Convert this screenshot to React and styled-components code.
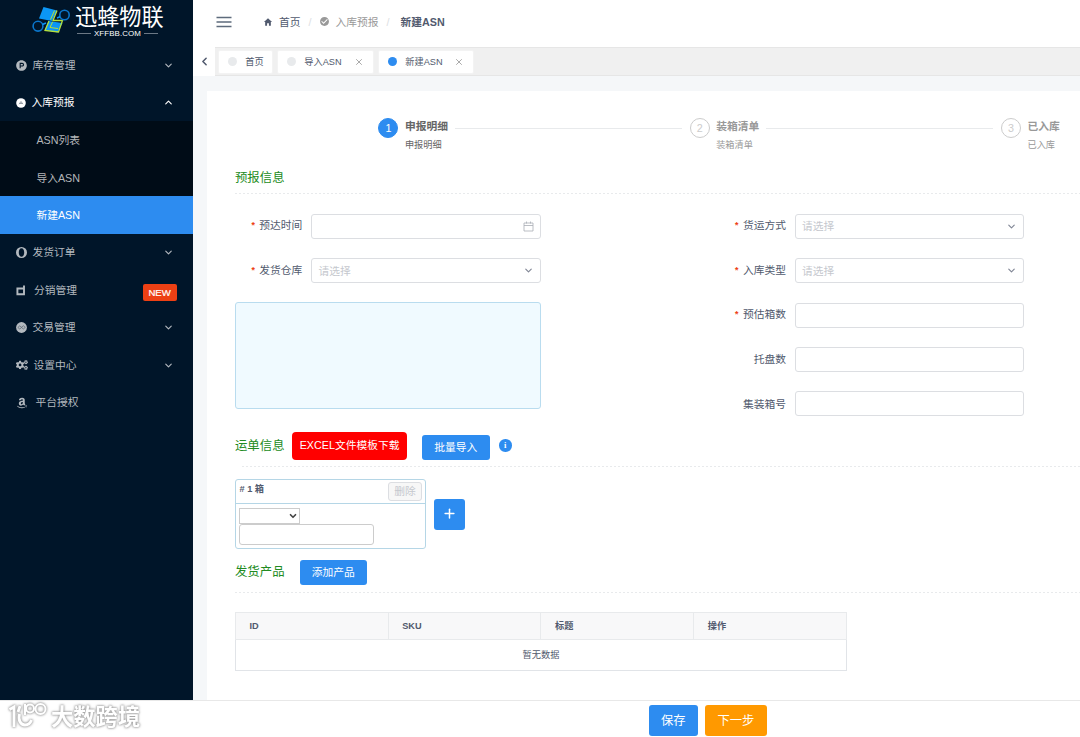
import React from 'react';
import styled, { createGlobalStyle, css } from 'styled-components';
import { ChevronDown, ChevronUp, ChevronLeft, X, Plus } from 'lucide-react';
import { FaProductHunt, FaCogs, FaAmazon } from 'react-icons/fa';
import { IoMdHome, IoMdCheckmarkCircle } from 'react-icons/io';

const GlobalStyle = createGlobalStyle`
  * {
    box-sizing: border-box;
  }

  body {
    margin: 0;
    overflow: hidden;
    background: #fff;
    color: #515a6e;
    font-family: "Liberation Sans", "Noto Sans CJK SC", sans-serif;
    font-size: 10.75px;
    line-height: 16px;
  }

  button, input, select, textarea {
    font-family: inherit;
    margin: 0;
  }
`;

const Page = styled.div`
  width: 1080px;
  height: 737px;
  display: flex;
  flex-direction: column;
  overflow: hidden;
`;

const Body = styled.div`
  display: flex;
  height: 700px;
`;

const Sidebar = styled.aside`
  flex: none;
  width: 193.4px;
  background: #001529;
`;

const Brand = styled.div`
  height: 46.4px;
  display: flex;
  padding: 5px 0 0 31px;
  gap: 4px;
`;

const BrandText = styled.div`
  color: #fff;
  padding-top: 1px;

  strong {
    display: block;
    font-size: 22.2px;
    font-weight: 400;
    line-height: 23px;
    white-space: nowrap;
  }
`;

const Domain = styled.div`
  display: flex;
  align-items: center;
  gap: 3px;
  margin-left: 2px;
  font-size: 7.9px;
  letter-spacing: .1px;
  line-height: 9px;

  &::before, &::after {
    content: "";
    width: 14px;
    height: 1px;
    background: #6b7885;
  }
`;

const MenuItem = styled.div`
  height: 37.5px;
  display: flex;
  align-items: center;
  padding: 0 19.2px 0 15.5px;
  color: ${props => props.$open ? '#fff' : '#b3b9bf'};

  > svg:first-child {
    flex: none;
  }

  span {
    flex: 1;
    margin-top: -1px;
    padding-left: ${props => props.$gap || 5}px;
  }
`;

const SubMenu = styled.div`
  background: #000c17;
`;

const SubItem = styled.div`
  height: 37.5px;
  line-height: 38px;
  padding-left: 36.4px;
  color: ${props => props.$active ? '#fff' : '#b3b6b9'};
  background: ${props => props.$active ? '#2d8cf0' : 'transparent'};
`;

const Badge = styled.b`
  margin: 4px -2.4px 0 0;
  width: 34px;
  height: 17px;
  border-radius: 2px;
  background: #ed4014;
  color: #fff;
  font-size: 9.6px;
  font-weight: 400;
  line-height: 17px;
  text-align: center;
  -webkit-text-stroke: .2px #fff;
`;

const Main = styled.main`
  flex: 1;
  min-width: 0;
  display: flex;
  flex-direction: column;
  background: #f5f7f9;
`;

const Header = styled.header`
  height: 47px;
  display: flex;
  align-items: center;
  padding: 0 0 4px 22.6px;
  background: #fff;
`;

const Crumbs = styled.nav`
  display: flex;
  align-items: center;
  margin-left: 31px;

  svg {
    margin-right: 6px;
  }

  i {
    width: 19px;
    text-align: center;
    font-style: normal;
    color: #dcdee2;
  }

  i + svg {
    margin-left: -1px;
  }

  span {
    color: #999;
  }
`;

const TabBar = styled.div`
  height: 29.4px;
  display: flex;
  align-items: center;
  background: #f0f0f0;
  border: solid #e6e6e6;
  border-width: 1px 0;
`;

const Arrow = styled.div`
  width: 21.4px;
  height: 29px;
  display: flex;
  align-items: center;
  justify-content: center;
  margin-right: 3.6px;
  background: #fff;
`;

const Tab = styled.div`
  width: ${props => props.$width}px;
  height: 24px;
  margin-right: 4px;
  display: flex;
  align-items: center;
  padding: 0 9px 0 8.5px;
  background: #fff;
  border: 1px solid #f3f3f3;
  border-radius: 2px;
  font-size: 9.2px;
  white-space: nowrap;

  &::before {
    content: "";
    flex: none;
    width: 9.4px;
    height: 9.4px;
    margin-right: 8px;
    border-radius: 50%;
    background: ${props => props.$active ? '#2d8cf0' : '#e8eaec'};
  }

  svg {
    margin-left: auto;
  }
`;

const Card = styled.section`
  flex: 1;
  margin: 14.6px 0 0 13.6px;
  padding-left: 28px;
  background: #fff;
  overflow: hidden;
`;

const Steps = styled.div`
  height: 74px;
  padding: 27px 0 0 143.4px;
  display: flex;
`;

const Step = styled.div`
  flex: none;
  width: 311.3px;
  display: flex;
  color: ${props => props.$active ? '#666' : '#999'};

  &:last-child h4::after {
    display: none;
  }
`;

const StepNumber = styled.div`
  width: 20px;
  height: 20px;
  margin-right: 6.5px;
  border: 1px solid ${props => props.$active ? '#2d8cf0' : '#ccc'};
  border-radius: 50%;
  background: ${props => props.$active ? '#2d8cf0' : '#fff'};
  color: ${props => props.$active ? '#fff' : '#ccc'};
  text-align: center;
  line-height: 19px;
`;

const StepText = styled.div`
  flex: 1;

  h4 {
    display: flex;
    align-items: center;
    margin: 0;
    font-size: 10.75px;
    line-height: 17px;
  }

  h4::after {
    content: "";
    flex: 1;
    height: 1px;
    margin: 4px 8px 0 7px;
    background: #e8eaec;
  }

  p {
    margin: 2px 0 0;
    font-size: 9.2px;
  }
`;

const SectionTitle = styled.h3`
  display: flex;
  align-items: center;
  height: ${props => props.$height}px;
  margin: 0;
  padding: ${props => props.$pad || '0 0 2px'};
  color: #228b22;
  font-size: 12.4px;
  font-weight: 400;
`;

const Divider = styled.div`
  height: 1px;
  margin-left: ${props => props.$indent || 0}px;
  background: repeating-linear-gradient(90deg, #e8eaec 0 2px, transparent 2px 4px);
`;

const FormGrid = styled.div`
  display: grid;
  grid-template-columns: 306px 305.4px;
  column-gap: 177.6px;
  height: 236px;
  padding-top: 20px;
`;

const FormColumn = styled.div`
  display: flex;
  flex-direction: column;
  gap: 19.3px;
`;

const Field = styled.div`
  flex: none;
  height: 25px;
  display: flex;
  align-items: center;
`;

const Label = styled.label`
  width: 67.4px;
  margin-right: 9px;
  text-align: right;
  white-space: nowrap;

  em {
    margin-right: 3.5px;
    color: #ed4014;
    font-family: "Liberation Mono", monospace;
    font-weight: 700;
    font-style: normal;
    font-size: 9px;
  }
`;

const Control = styled.div`
  flex: 1;
  height: 25px;
  display: flex;
  align-items: center;
  justify-content: space-between;
  padding: 0 6px;
  border: 1px solid #dcdee2;
  border-radius: 3px;
  color: #c5c8ce;

  svg {
    margin-left: auto;
  }
`;

const Remark = styled.textarea`
  width: 306px;
  height: 107px;
  flex: none;
  margin-top: -.6px;
  resize: none;
  border: 1px solid #b9dcef;
  border-radius: 3px;
  background: #f0faff;
`;

const buttonKinds = {
  primary: css`
    background: #2d8cf0;
  `,
  danger: css`
    background: #f00;
    border-radius: 4px;
  `,
  warning: css`
    background: #f90;
  `,
  disabled: css`
    background: #f7f7f7;
    border: 1px solid #dcdee2;
    color: #c5c8ce;
  `,
};

const Button = styled.button`
  display: flex;
  flex: none;
  align-items: center;
  justify-content: center;
  width: ${props => props.$width}px;
  height: ${props => props.$height}px;
  margin-top: ${props => props.$top || 0}px;
  margin-left: ${props => props.$left || 0}px;
  padding: 0 0 2px;
  border: 0;
  border-radius: 3px;
  color: #fff;
  font-size: ${props => props.$size || 10.75}px;
  white-space: nowrap;
  ${props => buttonKinds[props.$kind || 'primary']}
`;

const Info = styled.span`
  width: 12.5px;
  height: 12.5px;
  margin: -1px 0 0 9.5px;
  border-radius: 50%;
  background: #2d8cf0;
  color: #fff;
  font: bold 8.5px/12.5px "Liberation Serif", serif;
  text-align: center;
`;

const Boxes = styled.div`
  display: flex;
  align-items: center;
  padding-top: 12px;
`;

const Box = styled.div`
  width: 191px;
  height: 70px;
  border: 1px solid #b5d6e6;
  border-radius: 3px;
`;

const BoxHead = styled.div`
  height: 24px;
  display: flex;
  justify-content: space-between;
  padding: 2px 3px 0 3.5px;
  border-bottom: 1px solid #b5d6e6;
  font-size: 9.2px;

  b {
    margin-top: -1px;
  }
`;

const Carrier = styled.div`
  width: 61px;
  height: 16px;
  margin: 4px 0 0 3px;
  display: flex;
  align-items: center;
  justify-content: flex-end;
  padding-right: 1px;
  border: 1px solid #ccc;
`;

const Tracking = styled.input`
  display: block;
  width: 135px;
  height: 21px;
  margin: 0 0 0 3px;
  border: 1px solid #ccc;
  border-radius: 3px;
`;

const Table = styled.table`
  width: 612px;
  margin-top: 18.6px;
  table-layout: fixed;
  border-collapse: collapse;
  border: 1px solid #e1e4e8;
  font-size: 9.2px;

  th {
    height: 27px;
    padding: 0 0 0 13.5px;
    border: 1px solid #e8eaec;
    background: #f8f8f9;
    text-align: left;
  }

  td {
    height: 31px;
    padding: 0;
    text-align: center;
  }
`;

const Footer = styled.footer`
  height: 37px;
  display: flex;
  align-items: flex-start;
  padding: 4.4px 0 0 8px;
  border-top: 1px solid #e8e8e8;
  background: #fff;
`;

const Watermark = styled.div`
  display: flex;
  width: 640.6px;
  margin-top: -3px;
  color: #fff;
  filter: drop-shadow(0 0 1px #999) drop-shadow(0 0 1px #bbb);

  b {
    margin: 4px 0 0 3px;
    font-size: 22.3px;
    line-height: 24px;
    font-weight: 700;
  }
`;

const BrandLogo = () => (
  <svg width="40" height="32" viewBox="31 5 40 32">
    <path d="M43.500 7 57 10.500 52 21 39 18.500Z" fill="#0b96f5" />
    <path d="M48.500 21 62.500 23 57.500 32.500 45 30Z" fill="#0b96f5" />
    <path d="M57 10.500 53 20.500H62.500L58.500 32 45 30.500 49 21" fill="none" stroke="#b5e03c" strokeWidth="1.300" />
    <path d="M54.500 10.500 50.500 19.500M52.500 22 50 27.500 58 28.500" fill="none" stroke="#b5e03c" strokeWidth="1" />
    <circle cx="38" cy="26.200" r="4.900" fill="none" stroke="#0a76cc" strokeWidth="1.600" />
    <circle cx="64.500" cy="15" r="4.700" fill="none" stroke="#0a76cc" strokeWidth="1.600" />
    <path d="m42.500 24.500 3.500-1.500M57 18l3-1.200" stroke="#0b96f5" strokeWidth="1.500" />
  </svg>
);

const InboundIcon = () => (
  <svg width="10" height="10" viewBox="0 0 10 10">
    <circle cx="5" cy="5" r="4.800" fill="#fff" />
    <path d="M3 6.200 5 3.500l2 2.700M4 5.500h2" fill="none" stroke="#7d8791" strokeWidth=".8" />
  </svg>
);

const OrderIcon = () => (
  <svg width="11" height="11" viewBox="0 0 11 11">
    <path fillRule="evenodd" fill="currentColor" d="M5.500 0a5.500 5.500 0 1 0 0 11 5.500 5.500 0 0 0 0-11Zm0 1.300c1.700 0 2.700 1.900 2.700 4.200s-1 4.200-2.700 4.200-2.700-1.900-2.700-4.200 1-4.200 2.700-4.200Z" />
  </svg>
);

const ResaleIcon = () => (
  <svg width="10" height="11" viewBox="0 0 10 11">
    <path d="M8 .5v9M1.400 3.500H8v5.800H1.400z" fill="none" stroke="currentColor" strokeWidth="1.900" />
  </svg>
);

const TradeIcon = () => (
  <svg width="11" height="11" viewBox="0 0 11 11">
    <circle cx="5.500" cy="5.500" r="5.400" fill="currentColor" />
    <path d="m1.800 5.500 2-1.700L7.300 7l2-1.600-2-1.700L3.800 7Z" fill="none" stroke="#56636f" strokeWidth=".7" />
  </svg>
);

const MenuIcon = () => (
  <svg width="16" height="12" viewBox="0 0 16 12">
    <path d="M.5 1.500h15M.5 6h15M.5 10.500h15" stroke="#5e6b7c" strokeWidth="1.300" />
  </svg>
);

const CalendarIcon = () => (
  <svg width="11" height="11" viewBox="0 0 11 11">
    <path d="M1 2h9v8H1zM1 4.500h9M3.500.5v2M7.500.5v2" fill="none" stroke="#a9adb5" strokeWidth=".8" />
  </svg>
);

const WatermarkLogo = () => (
  <svg width="40" height="27" viewBox="8 702 40 27" fill="none" stroke="#fff" strokeWidth="2.800">
    <path d="m9.500 709.500 4.500-2.500v20M20 706l-2 6" />
    <path d="M19.500 714c-1.500 6 1 11 5.500 11 3 0 5.500-2 6.500-5" />
    <path d="M25 704v11" strokeWidth="2" />
    <circle cx="30" cy="708.500" r="4" strokeWidth="2" />
    <circle cx="40.500" cy="709" r="5" strokeWidth="2" />
  </svg>
);

const Chevron = ({ color = '#b3b9bf' }) => <ChevronDown size={11} strokeWidth={2.5} color={color} />;

const rightFields = [
  { label: '货运方式', required: true, select: true },
  { label: '入库类型', required: true, select: true },
  { label: '预估箱数', required: true },
  { label: '托盘数' },
  { label: '集装箱号' },
];

const FormField = ({ label, required, select, children }) => (
  <Field>
    <Label>{required && <em>*</em>}{label}</Label>
    <Control>
      {select && <>请选择<Chevron color="#808695" /></>}
      {children}
    </Control>
  </Field>
);

const App = () => {
  return <>
    <GlobalStyle />
    <Page>
      <Body>
        <Sidebar>
          <Brand>
            <BrandLogo />
            <BrandText>
              <strong>迅蜂物联</strong>
              <Domain>XFFBB.COM</Domain>
            </BrandText>
          </Brand>

          <MenuItem $gap={6}><FaProductHunt size={11} /><span>库存管理</span><Chevron /></MenuItem>
          <MenuItem $open $gap={6}><InboundIcon /><span>入库预报</span><ChevronUp size={11} strokeWidth={2.5} /></MenuItem>
          <SubMenu>
            <SubItem>ASN列表</SubItem>
            <SubItem>导入ASN</SubItem>
            <SubItem $active>新建ASN</SubItem>
          </SubMenu>
          <MenuItem $gap={6}><OrderIcon /><span>发货订单</span><Chevron /></MenuItem>
          <MenuItem $gap={8.5}><ResaleIcon /><span>分销管理</span><Badge>NEW</Badge></MenuItem>
          <MenuItem $gap={6}><TradeIcon /><span>交易管理</span><Chevron /></MenuItem>
          <MenuItem $gap={6}><FaCogs size={12} /><span>设置中心</span><Chevron /></MenuItem>
          <MenuItem $gap={8}><FaAmazon size={12} /><span>平台授权</span></MenuItem>
        </Sidebar>

        <Main>
          <Header>
            <MenuIcon />
            <Crumbs>
              <IoMdHome size={10} />首页
              <i>/</i>
              <IoMdCheckmarkCircle size={11} color="#999" /><span>入库预报</span>
              <i>/</i>
              <b>&nbsp;新建ASN</b>
            </Crumbs>
          </Header>

          <TabBar>
            <Arrow><ChevronLeft size={13} strokeWidth={2.8} /></Arrow>
            <Tab $width={55}>首页</Tab>
            <Tab $width={97}>导入ASN<X size={10} strokeWidth={2} color="#999" /></Tab>
            <Tab $width={96} $active>新建ASN<X size={10} strokeWidth={2} color="#999" /></Tab>
          </TabBar>

          <Card>
            <Steps>
              {['申报明细', '装箱清单', '已入库'].map((title, index) => (
                <Step key={title} $active={index === 0}>
                  <StepNumber $active={index === 0}>{index + 1}</StepNumber>
                  <StepText>
                    <h4>{title}</h4>
                    <p>{title}</p>
                  </StepText>
                </Step>
              ))}
            </Steps>

            <SectionTitle $height={28}>预报信息</SectionTitle>
            <Divider />

            <FormGrid>
              <FormColumn>
                <FormField label="预达时间" required><CalendarIcon /></FormField>
                <FormField label="发货仓库" required select />
                <Remark />
              </FormColumn>
              <FormColumn>
                {rightFields.map(field => <FormField key={field.label} {...field} />)}
              </FormColumn>
            </FormGrid>

            <SectionTitle $height={36} $pad="0 0 4px">
              运单信息
              <Button $kind="danger" $width={115} $height={28} $left={7.5}>EXCEL文件模板下载</Button>
              <Button $width={67.5} $height={25} $left={15} $top={3}>批量导入</Button>
              <Info>i</Info>
            </SectionTitle>
            <Divider $indent={7} />

            <Boxes>
              <Box>
                <BoxHead>
                  <b># 1 箱</b>
                  <Button $kind="disabled" $width={34} $height={19}>删除</Button>
                </BoxHead>
                <Carrier><ChevronDown size={10} strokeWidth={4} color="#444" /></Carrier>
                <Tracking />
              </Box>
              <Button $width={31} $height={31} $left={8} $top={1}><Plus size={15} strokeWidth={2.4} /></Button>
            </Boxes>

            <SectionTitle $height={43} $pad="3px 0 0">
              发货产品
              <Button $width={67.5} $height={25} $left={15} $top={1}>添加产品</Button>
            </SectionTitle>
            <Divider />

            <Table>
              <thead>
                <tr><th>ID</th><th>SKU</th><th>标题</th><th>操作</th></tr>
              </thead>
              <tbody>
                <tr><td colSpan={4}>暂无数据</td></tr>
              </tbody>
            </Table>
          </Card>
        </Main>
      </Body>

      <Footer>
        <Watermark><WatermarkLogo /><b>大数跨境</b></Watermark>
        <Button $width={49.5} $height={31} $size={12.3}>保存</Button>
        <Button $kind="warning" $width={61.5} $height={31} $size={12.3} $left={7}>下一步</Button>
      </Footer>
    </Page>
  </>;
};

export default App;
